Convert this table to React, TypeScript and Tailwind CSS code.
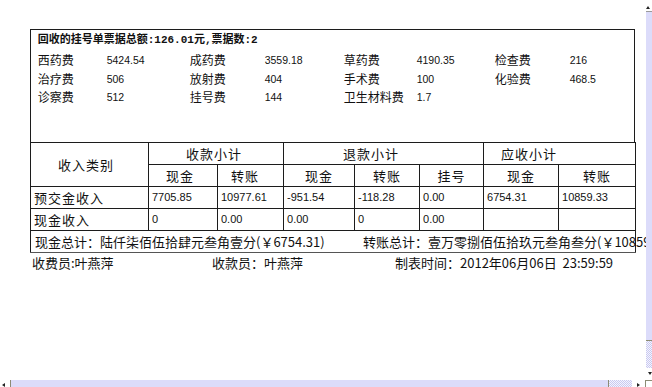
const cjk = "font-['Noto_Sans_CJK_SC',sans-serif]";
const num = "font-['Liberation_Sans','Noto_Sans_CJK_SC',sans-serif]";

const fees: [string, string][] = [
  ['西药费', '5424.54'], ['成药费', '3559.18'], ['草药费', '4190.35'], ['检查费', '216'],
  ['治疗费', '506'], ['放射费', '404'], ['手术费', '100'], ['化验费', '468.5'],
  ['诊察费', '512'], ['挂号费', '144'], ['卫生材料费', '1.7'],
];

const rows = [
  { name: '预交金收入', vals: ['7705.85', '10977.61', '-951.54', '-118.28', '0.00', '6754.31', '10859.33'] },
  { name: '现金收入', vals: ['0', '0.00', '0.00', '0', '0.00', '', ''] },
];

// sub headers; the first two sit left of centre in the original report
const subHeads = [
  { t: '现金', c: 'text-left pl-[17px]' },
  { t: '转账', c: 'text-left pl-[13px]' },
  { t: '现金', c: 'text-center' },
  { t: '转账', c: 'text-center' },
  { t: '挂号', c: 'text-center' },
  { t: '现金', c: 'text-center' },
  { t: '转账', c: 'text-center' },
];

const line = 'border border-[#1c1c1c]';

function Checker({ className }: { className: string }) {
  return (
    <div
      className={`bg-[repeating-conic-gradient(#c9c9ef_0_25%,#f4f4ff_0_50%)] bg-[length:2px_2px] ${className}`}
    />
  );
}

function Arrow({ dir }: { dir: 'up' | 'down' | 'left' | 'right' }) {
  const pts = {
    up: '0,3 2,0 4,3',
    down: '0,0 4,0 2,3',
    left: '3,0 3,4 0,2',
    right: '0,0 0,4 3,2',
  }[dir];
  return (
    <svg width="4" height="4" viewBox="0 0 4 4" className="block">
      <polygon points={pts} fill="#222" />
    </svg>
  );
}

export default function App() {
  return (
    <div className="w-[652px] h-[387px] flex flex-col bg-white overflow-hidden text-[#111]">
      <div className="flex flex-1 min-h-0">
        {/* Report */}
        <div className="flex-1 min-w-0 overflow-hidden pl-[30px] pt-[29px]">
          <div className="w-[605px] h-[113px] border border-b-0 border-[#1c1c1c] pl-[6.7px]">
            <div className="h-[20px] leading-[20px] text-[11px] font-bold whitespace-nowrap font-['Liberation_Mono','Noto_Sans_CJK_SC',monospace]">
              回收的挂号单票据总额:126.01元,票据数:2
            </div>
            <div className="mt-[1px] grid grid-cols-[69px_83px_75px_79px_73px_78px_75px_1fr]">
              {fees.map(([label, value]) => (
                <div key={label} className="contents">
                  <div className={`h-[18.5px] leading-[18.5px] text-[12px] whitespace-nowrap ${cjk}`}>{label}</div>
                  <div className={`h-[18.5px] leading-[18.5px] text-[10.5px] ${num}`}>{value}</div>
                </div>
              ))}
            </div>
          </div>

          <table className="w-[605px] table-fixed border-collapse">
            <colgroup>
              <col className="w-[118px]" />
              <col className="w-[69px]" />
              <col className="w-[66px]" />
              <col className="w-[71px]" />
              <col className="w-[65px]" />
              <col className="w-[64px]" />
              <col className="w-[75px]" />
              <col className="w-[77px]" />
            </colgroup>
            <tbody className={`text-[13px] ${cjk}`}>
              <tr className="h-[22px]">
                <td rowSpan={2} className={`${line} text-left pl-[27px] tracking-[1px]`}>收入类别</td>
                <td colSpan={2} className={`${line} text-left pl-[37px] tracking-[1px] p-0`}>收款小计</td>
                <td colSpan={3} className={`${line} text-left pl-[59px] tracking-[1px] p-0`}>退款小计</td>
                <td colSpan={2} className={`${line} text-left pl-[17px] tracking-[1px] p-0`}>应收小计</td>
              </tr>
              <tr className="h-[22px]">
                {subHeads.map((h, i) => (
                  <td key={i} className={`${line} ${h.c} tracking-[1px] py-0`}>{h.t}</td>
                ))}
              </tr>
              {rows.map((r) => (
                <tr key={r.name} className="h-[22px]">
                  <td className={`${line} pl-[3px] tracking-[1px]`}>{r.name}</td>
                  {r.vals.map((v, i) => (
                    <td key={i} className={`${line} pl-[3px] text-[11px] ${num}`}>{v}</td>
                  ))}
                </tr>
              ))}
              <tr className="h-[22px]">
                <td colSpan={8} className={`${line} border-b-[#555] pl-[4px] whitespace-nowrap`}>
                  <span className="inline-block w-[328px]">现金总计：陆仟柒佰伍拾肆元叁角壹分(￥6754.31)</span>
                  <span>转账总计：壹万零捌佰伍拾玖元叁角叁分(￥10859.33)</span>
                </td>
              </tr>
            </tbody>
          </table>

          <div className={`flex h-[19px] leading-[19px] pl-[2px] text-[13px] whitespace-pre ${cjk}`}>
            <span className="w-[180px]">收费员:叶燕萍</span>
            <span className="w-[183px]">收款员：叶燕萍</span>
            <span>制表时间：2012年06月06日  23:59:59</span>
          </div>
        </div>

        {/* Vertical scrollbar */}
        <div className="w-[6px] flex flex-col">
          <div className="h-[12px] border-b border-[#9a9a9a] flex items-end pb-[1px]">
            <Arrow dir="up" />
          </div>
          <div className="flex-1 bg-[#dcdcfa]" />
          <Checker className="h-[28px] border-t border-[#8c8c74]" />
          <div className="h-[12px] flex items-center pl-[2px]">
            <Arrow dir="down" />
          </div>
        </div>
      </div>

      {/* Horizontal scrollbar */}
      <div className="h-[7px] flex">
        <div className="w-[10px] flex items-end pl-[2px]">
          <Arrow dir="left" />
        </div>
        <div className="w-[598px] border-l border-[#8c8c74] bg-[#dcdcfa]" />
        <Checker className="w-[24px] border-l border-[#8c8c74]" />
        <div className="w-[13px] flex items-end pl-[5px]">
          <Arrow dir="right" />
        </div>
        <div className="flex-1 border-l border-t border-[#8c8c74]" />
      </div>
    </div>
  );
}
